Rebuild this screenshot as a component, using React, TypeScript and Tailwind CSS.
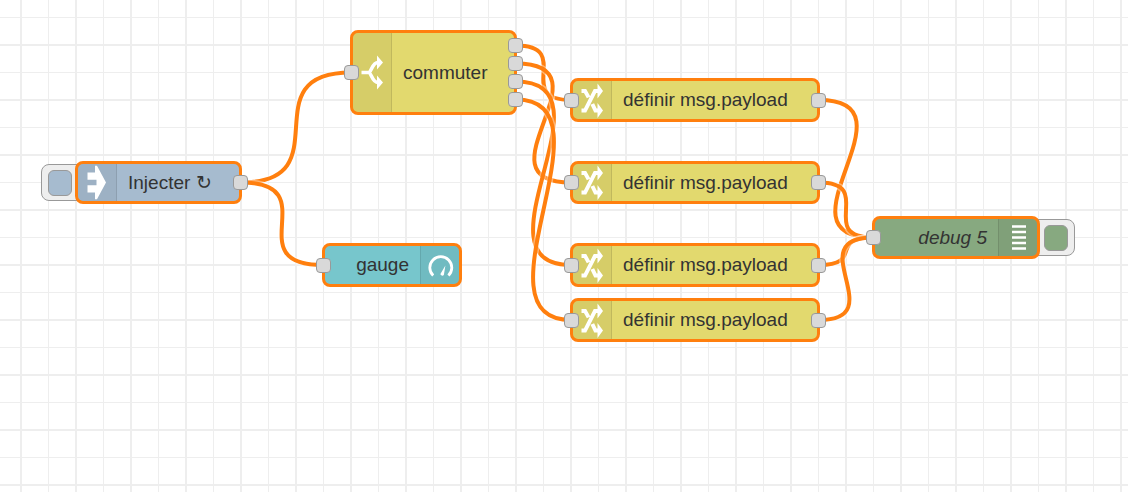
import type { ReactNode } from "react";
import clsx from "clsx";

type IconName = "inject" | "switch" | "change" | "gauge" | "debug";

interface FlowNode {
  id: string;
  label: string;
  icon: IconName;
  iconSide: "left" | "right";
  color: string;
  x: number;
  y: number;
  width: number;
  height: number;
  hasInput: boolean;
  outputs: number;
  button?: "left" | "right";
  italic?: boolean;
}

const NODES: FlowNode[] = [
  { id: "inject", label: "Injecter ↻", icon: "inject", iconSide: "left", color: "bg-[#a6bbcf]", x: 75, y: 161, width: 167, height: 43, hasInput: false, outputs: 1, button: "left" },
  { id: "switch", label: "commuter", icon: "switch", iconSide: "left", color: "bg-[#e2d96e]", x: 350, y: 30, width: 167, height: 85, hasInput: true, outputs: 4 },
  { id: "change-1", label: "définir msg.payload", icon: "change", iconSide: "left", color: "bg-[#e2d96e]", x: 570, y: 78, width: 250, height: 44, hasInput: true, outputs: 1 },
  { id: "change-2", label: "définir msg.payload", icon: "change", iconSide: "left", color: "bg-[#e2d96e]", x: 570, y: 161, width: 250, height: 43, hasInput: true, outputs: 1 },
  { id: "change-3", label: "définir msg.payload", icon: "change", iconSide: "left", color: "bg-[#e2d96e]", x: 570, y: 243, width: 250, height: 44, hasInput: true, outputs: 1 },
  { id: "change-4", label: "définir msg.payload", icon: "change", iconSide: "left", color: "bg-[#e2d96e]", x: 570, y: 298, width: 250, height: 44, hasInput: true, outputs: 1 },
  { id: "gauge", label: "gauge", icon: "gauge", iconSide: "right", color: "bg-[#77c6cc]", x: 322, y: 243, width: 140, height: 44, hasInput: true, outputs: 0 },
  { id: "debug", label: "debug 5", icon: "debug", iconSide: "right", color: "bg-[#87a980]", x: 872, y: 216, width: 168, height: 43, hasInput: true, outputs: 0, button: "right", italic: true },
];

const WIRES: [string, number, string][] = [
  ["inject", 0, "switch"],
  ["inject", 0, "gauge"],
  ["switch", 0, "change-1"],
  ["switch", 1, "change-2"],
  ["switch", 2, "change-3"],
  ["switch", 3, "change-4"],
  ["change-1", 0, "debug"],
  ["change-2", 0, "debug"],
  ["change-3", 0, "debug"],
  ["change-4", 0, "debug"],
];

const PORT_PITCH = 18;
const MAX_REACH = 103;
const NODE_REACH = 137.5;

function portOffset(index: number, count: number) {
  return (index - (count - 1) / 2) * PORT_PITCH;
}

function wirePath(fromId: string, port: number, toId: string) {
  const from = NODES.find((n) => n.id === fromId)!;
  const to = NODES.find((n) => n.id === toId)!;
  const x1 = from.x + from.width - 1;
  const y1 = from.y + from.height / 2 + portOffset(port, from.outputs);
  const x2 = to.x + 1;
  const y2 = to.y + to.height / 2;
  const distance = Math.hypot(x2 - x1, y2 - y1);
  const reach = distance < NODE_REACH ? distance * 0.75 : MAX_REACH;
  return `M${x1} ${y1}C${x1 + reach} ${y1} ${x2 - reach} ${y2} ${x2} ${y2}`;
}

const ICONS: Record<IconName, ReactNode> = {
  inject: (
    <path d="M10.500 10.500H18V3.800H20L29 20.500 20 37.200H18V30.500H10.500V23.200H19.500V17.800H10.500z" fill="#fff" />
  ),
  switch: (
    <g>
      <path d="M9.500 20.500H16.500C19.500 20.500 20 10.500 26 10.500M16.500 20.500C19.500 20.500 20 30.500 26 30.500" fill="none" stroke="#fff" strokeWidth="3.600" />
      <path d="M25 3.500l6 7-6 7zM25 23.500l6 7-6 7z" fill="#fff" />
    </g>
  ),
  change: (
    <g>
      <path d="M9.500 30.600h3.500L23 10.900h4M9.500 10.900h3.500l3.600 6.500M20.300 24l3.200 6.600h3.500" fill="none" stroke="#fff" strokeWidth="4" />
      <path d="M25.500 3.400l5.500 7.500-5.500 7.500zM25.500 23.100l5.500 7.500-5.500 7.500z" fill="#fff" />
    </g>
  ),
  gauge: (
    <g>
      <path d="M13.200 30.600a11 11 0 1 1 15.200 0" fill="none" stroke="#fff" strokeWidth="2.800" />
      <path d="M25.400 20.500l-1.500 9.300a1.900 1.900 0 0 1-3.500-.9z" fill="#fff" />
    </g>
  ),
  debug: <path d="M14 9.500h14M14 15h14M14 20.500h14M14 26h14M14 31.500h14" stroke="#fff" strokeWidth="2.300" />,
};

function Port() {
  return <span className="block size-[15px] rounded border border-[#999] bg-[#d9d9d9]" />;
}

function NodeButton({ node }: { node: FlowNode }) {
  const left = node.button === "left";
  return (
    <button
      type="button"
      aria-label={node.label}
      className={clsx(
        "absolute top-[3px] flex h-[37px] w-[45px] items-center rounded-lg border border-[#999] bg-[#eee] px-1.5",
        left ? "-left-[34px] justify-start" : "-right-[35px] justify-end",
      )}
    >
      <span className={clsx("h-[26px] w-6 rounded-md border border-[#999]", node.color)} />
    </button>
  );
}

function NodeView({ node }: { node: FlowNode }) {
  const iconLeft = node.iconSide === "left";
  return (
    <div className="absolute" style={{ left: node.x, top: node.y, width: node.width, height: node.height }}>
      {node.button && <NodeButton node={node} />}
      <div
        className={clsx(
          "relative flex size-full items-stretch overflow-hidden rounded-lg border-3 border-[#ff7f0e]",
          node.color,
          !iconLeft && "flex-row-reverse",
        )}
      >
        <div
          className={clsx(
            "flex w-[39px] shrink-0 items-center justify-center border-black/10 bg-black/5",
            iconLeft ? "border-r" : "border-l",
          )}
        >
          <svg viewBox="0 0 41 41" className="size-[41px] shrink-0" aria-hidden="true">
            {ICONS[node.icon]}
          </svg>
        </div>
        <div
          className={clsx(
            "flex grow items-center px-[11px] text-[19px] leading-6 whitespace-nowrap text-[#333]",
            !iconLeft && "justify-end",
            node.italic && "italic",
          )}
        >
          {node.label}
        </div>
      </div>
      {node.hasInput && (
        <div className="absolute inset-y-0 -left-1.5 flex items-center">
          <Port />
        </div>
      )}
      {node.outputs > 0 && (
        <div className="absolute inset-y-0 -right-1.5 flex flex-col items-center justify-center gap-[3px]">
          {Array.from({ length: node.outputs }, (_, i) => (
            <Port key={i} />
          ))}
        </div>
      )}
    </div>
  );
}

function Grid() {
  return (
    <svg className="absolute inset-0 size-full" aria-hidden="true">
      <defs>
        <pattern id="grid" x="20" y="44" width="55" height="55" patternUnits="userSpaceOnUse">
          <path d="M28 0h1v55h-1zM0 28h55v1H0z" fill="#eee" />
          <path d="M0 0h2v55H0zM0 0h55v2H0z" fill="#eee" />
        </pattern>
      </defs>
      <rect width="100%" height="100%" fill="url(#grid)" shapeRendering="crispEdges" />
    </svg>
  );
}

export default function App() {
  return (
    <main className="relative min-h-screen w-full overflow-hidden bg-white font-['Liberation_Sans','Noto_Sans_CJK_JP',sans-serif]">
      <Grid />
      <svg className="absolute inset-0 size-full" fill="none" aria-hidden="true">
        {WIRES.map(([from, port, to]) => {
          const d = wirePath(from, port, to);
          return (
            <g key={`${from}-${port}-${to}`}>
              <path d={d} stroke="#fff" strokeOpacity="0.4" strokeWidth="7" />
              <path d={d} stroke="#ff7f0e" strokeWidth="4" />
            </g>
          );
        })}
      </svg>
      {NODES.map((node) => (
        <NodeView key={node.id} node={node} />
      ))}
    </main>
  );
}
